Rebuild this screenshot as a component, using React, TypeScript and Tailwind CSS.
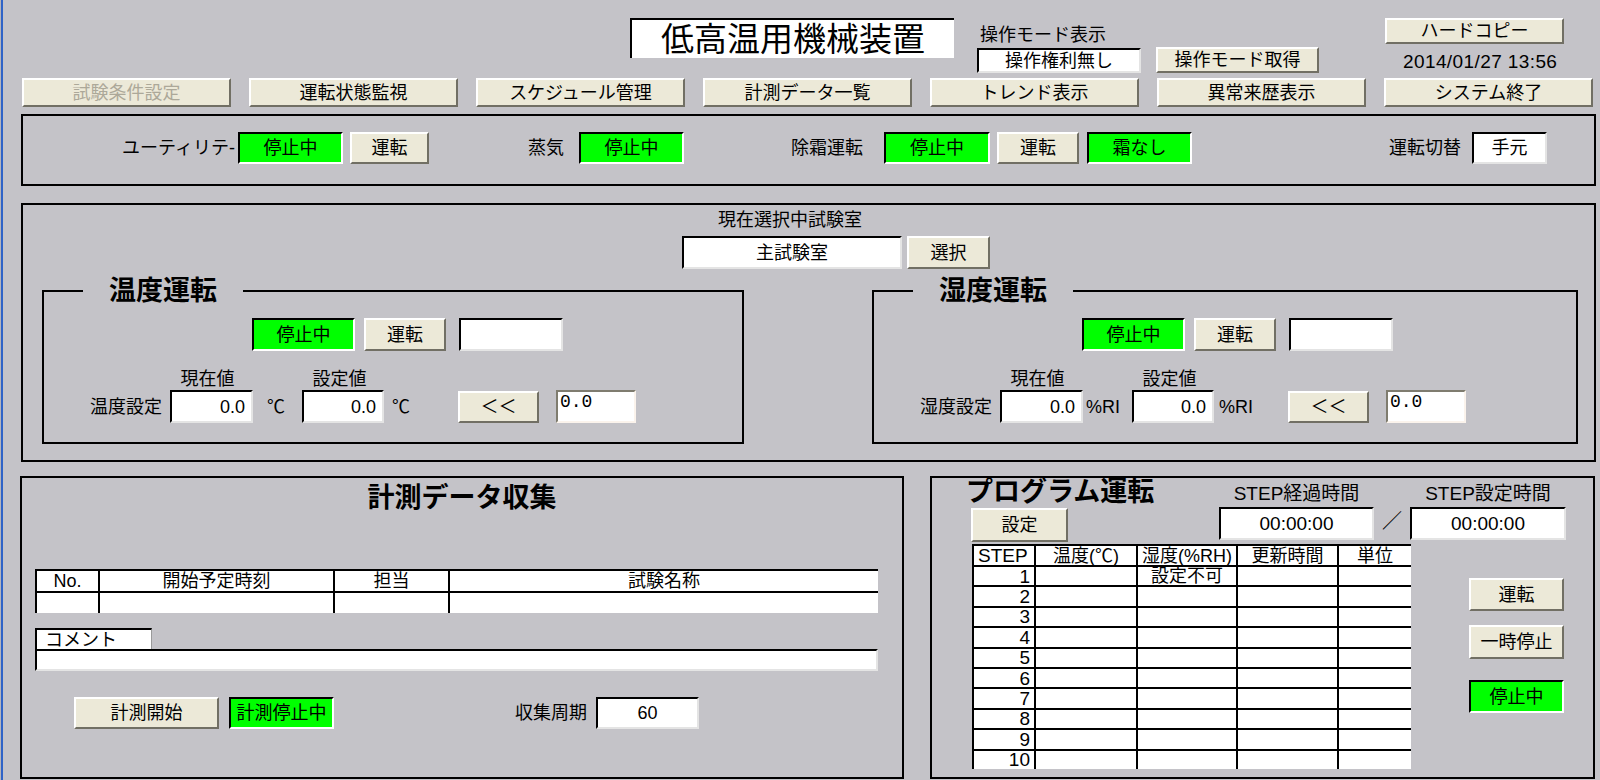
import type { ReactNode } from "react";

const navItems = ["試験条件設定", "運転状態監視", "スケジュール管理", "計測データ一覧", "トレンド表示", "異常来歴表示", "システム終了"];

function Btn({ className = "", disabled = false, children }: { className?: string; disabled?: boolean; children?: ReactNode }) {
  return (
    <div
      className={`flex items-center justify-center bg-[#ece9d8] border-2 border-t-white border-l-white border-r-[#716f64] border-b-[#716f64] text-[18px] leading-none whitespace-nowrap ${disabled ? "text-[#aca899]" : "text-black"} ${className}`}
    >
      {children}
    </div>
  );
}

function Lamp({ className = "", children }: { className?: string; children?: ReactNode }) {
  return (
    <div className={`flex items-center justify-center bg-[#00ff00] border-2 border-t-black border-l-black border-r-white border-b-white text-[18px] leading-none whitespace-nowrap ${className}`}>
      {children}
    </div>
  );
}

function Field({ className = "", children }: { className?: string; children?: ReactNode }) {
  return (
    <div className={`flex items-center bg-white border-2 border-t-black border-l-black border-r-[#e4e4e4] border-b-[#e4e4e4] text-[18px] leading-none whitespace-nowrap ${className}`}>
      {children}
    </div>
  );
}

function Edit({ className = "" }: { className?: string }) {
  return (
    <div className={`bg-white border-2 border-t-[#7f7c6f] border-l-[#7f7c6f] border-r-[#fbf3ec] border-b-[#fbf3ec] pl-[2px] pt-[1px] font-['Liberation_Mono',monospace] text-[18px] leading-[18px] ${className}`}>
      0.0
    </div>
  );
}

function Group({ title, label, unit, u1, u2, w }: { title: string; label: string; unit: string; u1: string; u2: string; w: string }) {
  return (
    <fieldset className={`border-2 border-black h-[168px] min-w-0 ${w}`}>
      <legend className="ml-[39px] px-[26px] text-[27px] font-bold leading-[30px]">{title}</legend>
      <div className="flex mt-[12px]">
        <Lamp className="ml-[208px] w-[103px] h-[33px]">停止中</Lamp>
        <Btn className="ml-[9px] w-[82px] h-[33px]">運転</Btn>
        <Field className="ml-[13px] w-[104px] h-[33px]" />
      </div>
      <div className="flex mt-[18px] h-[20px] text-[18px] leading-[20px]">
        <div className="ml-[122px] w-[83px] text-center">現在値</div>
        <div className="ml-[49px] w-[83px] text-center">設定値</div>
      </div>
      <div className="flex items-center mt-[1px] h-[33px]">
        <div className="ml-[34px] w-[84px] text-right text-[18px] leading-none whitespace-nowrap">{label}</div>
        <Field className="ml-[8px] w-[83px] h-[33px] justify-end pr-[6px]">0.0</Field>
        <div className={`w-[49px] text-[18px] leading-none whitespace-nowrap ${u1}`}>{unit}</div>
        <Field className="w-[82px] h-[33px] justify-end pr-[6px]">0.0</Field>
        <div className={`w-[74px] text-[18px] leading-none whitespace-nowrap ${u2}`}>{unit}</div>
        <Btn className="w-[81px] h-[32px]">＜＜</Btn>
        <Edit className="ml-[17px] w-[80px] h-[33px]" />
      </div>
    </fieldset>
  );
}

export default function App() {
  const cell = "bg-white border-t-2 border-l-2 border-black flex items-center text-[18px] leading-none whitespace-nowrap overflow-hidden";
  return (
    <div className="w-[1600px] h-[780px] overflow-hidden bg-[#c4c3c8] text-black font-['Liberation_Sans','Noto_Sans_CJK_JP',sans-serif] shadow-[inset_1px_0_0_#b4b4bc,inset_3px_0_0_#2f63c7]">
      {/* header */}
      <div className="flex items-start h-[78px]">
        <div className="ml-[630px] mt-[18px] w-[324px] h-[40px] bg-white border-t-2 border-l-2 border-black flex items-center justify-center text-[33px] leading-none">
          低高温用機械装置
        </div>
        <div className="ml-[23px] w-[164px]">
          <div className="mt-[25px] pl-[3px] h-[20px] leading-[20px] text-[18px] whitespace-nowrap">操作モード表示</div>
          <Field className="mt-[3px] w-[164px] h-[25px] justify-center">操作権利無し</Field>
        </div>
        <Btn className="ml-[15px] mt-[47px] w-[163px] h-[26px]">操作モード取得</Btn>
        <div className="ml-[66px] w-[179px] flex flex-col">
          <Btn className="mt-[18px] w-[179px] h-[26px]">ハードコピー</Btn>
          <div className="mt-[9px] pl-[18px] text-[19px] leading-[17px] tracking-[0.4px] whitespace-nowrap">2014/01/27 13:56</div>
        </div>
      </div>

      {/* navigation */}
      <div className="flex gap-[18px] pl-[22px]">
        {navItems.map((n, i) => (
          <Btn key={n} disabled={i === 0} className="w-[209px] h-[29px]">
            {n}
          </Btn>
        ))}
      </div>

      {/* utility */}
      <div className="ml-[21px] mt-[7px] w-[1575px] h-[72px] border-2 border-black flex items-center pb-[4px] text-[18px] leading-none whitespace-nowrap">
        <div className="ml-[77px] w-[135px] text-right">ユーティリテ-</div>
        <Lamp className="ml-[3px] w-[105px] h-[32px]">停止中</Lamp>
        <Btn className="ml-[7px] w-[79px] h-[32px]">運転</Btn>
        <div className="w-[135px] text-right">蒸気</div>
        <Lamp className="ml-[15px] w-[105px] h-[32px]">停止中</Lamp>
        <div className="w-[179px] text-right">除霜運転</div>
        <Lamp className="ml-[21px] w-[106px] h-[32px]">停止中</Lamp>
        <Btn className="ml-[7px] w-[82px] h-[32px]">運転</Btn>
        <Lamp className="ml-[8px] w-[105px] h-[32px]">霜なし</Lamp>
        <div className="w-[269px] text-right">運転切替</div>
        <Field className="ml-[11px] w-[75px] h-[32px] justify-center">手元</Field>
      </div>

      {/* operation */}
      <div className="ml-[21px] mt-[17px] w-[1575px] h-[259px] border-2 border-black">
        <div className="ml-[667px] mt-[5px] w-[200px] h-[20px] text-center text-[18px] leading-[20px] whitespace-nowrap">現在選択中試験室</div>
        <div className="flex ml-[659px] mt-[6px]">
          <Field className="w-[220px] h-[33px] justify-center">主試験室</Field>
          <Btn className="ml-[5px] w-[83px] h-[33px]">選択</Btn>
        </div>
        <div className="flex ml-[19px] mt-[7px]">
          <Group title="温度運転" label="温度設定" unit="℃" u1="pl-[14px]" u2="pl-[8px]" w="w-[702px]" />
          <div className="ml-[128px]">
            <Group title="湿度運転" label="湿度設定" unit="%RI" u1="pl-[3px]" u2="pl-[5px]" w="w-[706px]" />
          </div>
        </div>
      </div>

      {/* bottom */}
      <div className="flex mt-[14px]">
        <div className="ml-[20px] w-[884px] h-[303px] border-2 border-black">
          <div className="mt-[5px] text-center text-[27px] font-bold leading-[30px]">計測データ収集</div>
          <div className="ml-[13px] mt-[56px] w-[843px] grid grid-cols-[63px_235px_115px_430px]">
            <div className={`${cell} h-[22px] justify-center`}>No.</div>
            <div className={`${cell} h-[22px] justify-center`}>開始予定時刻</div>
            <div className={`${cell} h-[22px] justify-center`}>担当</div>
            <div className={`${cell} h-[22px] justify-center`}>試験名称</div>
            <div className={`${cell} h-[22px]`} />
            <div className={`${cell} h-[22px]`} />
            <div className={`${cell} h-[22px]`} />
            <div className={`${cell} h-[22px]`} />
          </div>
          <div className="ml-[13px] mt-[15px] w-[117px] h-[21px] bg-white border-t-2 border-l-2 border-r border-black border-r-[#9a9a9a] pl-[8px] flex items-center text-[18px] leading-none">
            コメント
          </div>
          <Field className="ml-[13px] w-[843px] h-[22px]" />
          <div className="flex items-center ml-[52px] mt-[26px] text-[18px] leading-none whitespace-nowrap">
            <Btn className="w-[145px] h-[32px]">計測開始</Btn>
            <Lamp className="ml-[10px] w-[105px] h-[32px]">計測停止中</Lamp>
            <div className="w-[253px] text-right">収集周期</div>
            <Field className="ml-[9px] w-[103px] h-[32px] justify-center">60</Field>
          </div>
        </div>

        <div className="ml-[26px] w-[665px] h-[303px] border-2 border-black">
          <div className="flex h-[66px]">
            <div className="ml-[34px] w-[253px]">
              <div className="text-[27px] font-bold leading-[28px] whitespace-nowrap">プログラム運転</div>
              <Btn className="ml-[5px] mt-[2px] w-[97px] h-[34px]">設定</Btn>
            </div>
            <div className="w-[155px]">
              <div className="h-[28px] pt-[5px] text-center text-[19px] leading-[22px] whitespace-nowrap">STEP経過時間</div>
              <Field className="mt-[1px] w-[155px] h-[33px] justify-center text-[19px]">00:00:00</Field>
            </div>
            <div className="w-[36px] pt-[32px] text-center text-[20px] leading-[22px]">／</div>
            <div className="w-[156px]">
              <div className="h-[28px] pt-[5px] text-center text-[19px] leading-[22px] whitespace-nowrap">STEP設定時間</div>
              <Field className="mt-[1px] w-[156px] h-[33px] justify-center text-[19px]">00:00:00</Field>
            </div>
          </div>
          <div className="flex">
            <div className="ml-[40px] w-[439px] grid grid-cols-[62px_102px_100px_101px_74px]">
              <div className={`${cell} h-[21px] pl-[4px] text-[19px]`}>STEP</div>
              <div className={`${cell} h-[21px] justify-center`}>温度(℃)</div>
              <div className={`${cell} h-[21px] justify-center`}>湿度(%RH)</div>
              <div className={`${cell} h-[21px] justify-center`}>更新時間</div>
              <div className={`${cell} h-[21px] justify-center`}>単位</div>
              {[1, 2, 3, 4, 5, 6, 7, 8, 9, 10].map((n) => (
                <div key={n} className="contents">
                  <div className={`${cell} h-[20.4px] justify-end pr-[4px] text-[19px]`}>{n}</div>
                  <div className={`${cell} h-[20.4px]`} />
                  <div className={`${cell} h-[20.4px] justify-center`}>{n === 1 ? "設定不可" : ""}</div>
                  <div className={`${cell} h-[20.4px]`} />
                  <div className={`${cell} h-[20.4px]`} />
                </div>
              ))}
            </div>
            <div className="ml-[58px] w-[95px]">
              <Btn className="mt-[34px] w-[95px] h-[33px]">運転</Btn>
              <Btn className="mt-[14px] w-[95px] h-[34px]">一時停止</Btn>
              <Lamp className="mt-[21px] w-[95px] h-[33px]">停止中</Lamp>
            </div>
          </div>
        </div>
      </div>
    </div>
  );
}
